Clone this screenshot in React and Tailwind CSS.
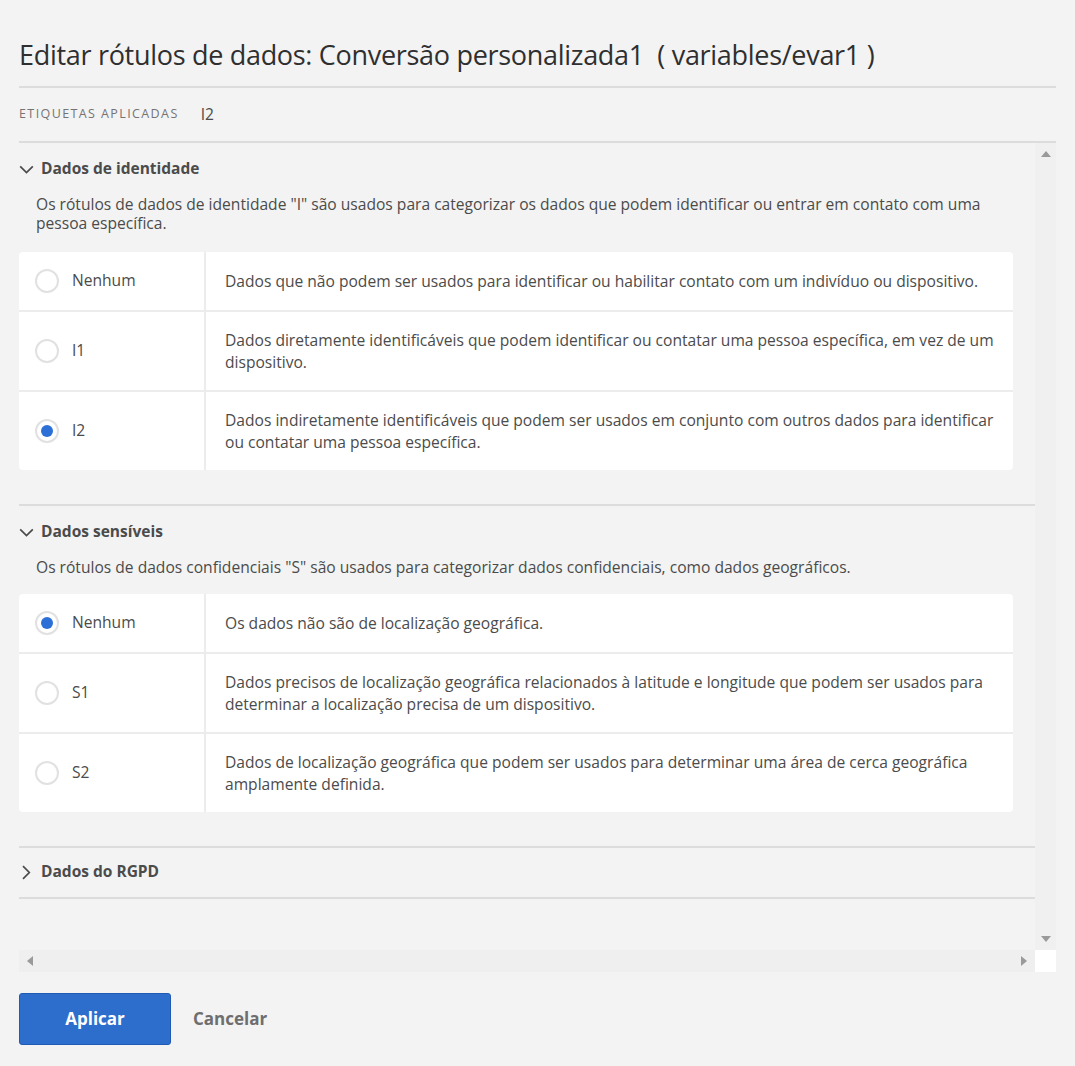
import React from 'react';

const identity = [
  { id: 'Nenhum', text: 'Dados que não podem ser usados para identificar ou habilitar contato com um indivíduo ou dispositivo.', h: 'h-[58px]' },
  { id: 'I1', text: 'Dados diretamente identificáveis que podem identificar ou contatar uma pessoa específica, em vez de um dispositivo.', h: 'h-[80px]' },
  { id: 'I2', text: 'Dados indiretamente identificáveis que podem ser usados em conjunto com outros dados para identificar ou contatar uma pessoa específica.', h: 'h-[80px]', checked: true },
];

const sensitive = [
  { id: 'Nenhum', text: 'Os dados não são de localização geográfica.', h: 'h-[58px]', checked: true },
  { id: 'S1', text: 'Dados precisos de localização geográfica relacionados à latitude e longitude que podem ser usados para determinar a localização precisa de um dispositivo.', h: 'h-[80px]' },
  { id: 'S2', text: 'Dados de localização geográfica que podem ser usados para determinar uma área de cerca geográfica amplamente definida.', h: 'h-[80px]' },
];

const Chevron = ({ open }) => (
  <svg width="15" height="15" viewBox="0 0 15 15" className="text-[#4b4b4b]">
    {open ? (
      <path d="M1.2 4.3 L7.5 10.6 L13.8 4.3" fill="none" stroke="currentColor" strokeWidth="1.7" />
    ) : (
      <path d="M4 1.2 L10.3 7.5 L4 13.8" fill="none" stroke="currentColor" strokeWidth="1.7" />
    )}
  </svg>
);

const Radio = ({ checked }) => (
  <span className="w-[24px] h-[24px] rounded-full border-2 border-[#e1e1e1] bg-white flex items-center justify-center">
    {checked && <span className="w-[12px] h-[12px] rounded-full bg-[#2c6fd6]" />}
  </span>
);

const Table = ({ rows }) => (
  <div className="bg-white rounded-[4px] w-[994px]">
    {rows.map((r, i) => (
      <div key={i} className={`flex ${r.h} ${i > 0 ? 'border-t-2 border-[#ececec]' : ''}`}>
        <div className="w-[187px] border-r-2 border-[#ececec] flex items-center gap-[13px] pl-[16px]">
          <Radio checked={r.checked} />
          <span className="text-[#4b4b4b]">{r.id}</span>
        </div>
        <div className="flex-1 flex items-center pl-[19px] pr-[12px] text-[#4b4b4b] leading-[22px]">{r.text}</div>
      </div>
    ))}
  </div>
);

const Section = ({ title, desc, rows, gap }) => (
  <div>
    <div className="flex items-center gap-[7px] h-[26px]">
      <Chevron open />
      <span className="font-bold text-[#4b4b4b] text-[15.5px]">{title}</span>
    </div>
    <p className="pl-[17px] pr-[30px] mt-[13px] leading-[18.5px] text-[#4b4b4b]">{desc}</p>
    <div className={gap}><Table rows={rows} /></div>
  </div>
);

export default function App() {
  return (
    <div className="w-[1075px] h-[1066px] bg-[#f3f3f3] px-[19px] pt-[36px] text-[15.6px] text-[#4b4b4b]" style={{ fontFamily: '"Open Sans", "Noto Sans", sans-serif' }}>
      <h1 className="text-[27px] leading-[38px] text-[#2f2f2f] tracking-[-0.3px]">Editar rótulos de dados: Conversão personalizada1 &nbsp;( variables/evar1 )</h1>
      <div className="mt-[12px] border-t-2 border-[#dcdcdc]" />
      <div className="flex items-center h-[53px] gap-[22px]">
        <span className="text-[12.5px] tracking-[1.4px] text-[#747474]">ETIQUETAS APLICADAS</span>
        <span className="text-[15.6px] text-[#4b4b4b]">I2</span>
      </div>
      <div className="border-t-2 border-[#dcdcdc]" />
      <div className="flex h-[829px]">
        <div className="flex-1 flex flex-col">
          <div className="flex-1 pt-[13px]">
            <Section
              title="Dados de identidade"
              desc={'Os rótulos de dados de identidade "I" são usados para categorizar os dados que podem identificar ou entrar em contato com uma pessoa específica.'}
              rows={identity}
              gap="mt-[20px]"
            />
            <div className="mt-[34px] border-t-2 border-[#dcdcdc]" />
            <div className="pt-[13px]">
              <Section
                title="Dados sensíveis"
                desc={'Os rótulos de dados confidenciais "S" são usados para categorizar dados confidenciais, como dados geográficos.'}
                rows={sensitive}
                gap="mt-[17px]"
              />
            </div>
            <div className="mt-[34px] border-t-2 border-[#dcdcdc]" />
            <div className="flex items-center gap-[7px] h-[49px]">
              <Chevron />
              <span className="font-bold text-[#4b4b4b] text-[15.5px]">Dados do RGPD</span>
            </div>
            <div className="border-t-2 border-[#dcdcdc]" />
          </div>
          <div className="h-[22px] bg-[#efefef] flex items-center justify-between px-[8px]">
            <svg width="6" height="10" viewBox="0 0 6 10"><path d="M6 0 L0 5 L6 10 Z" fill="#9a9a9a" /></svg>
            <svg width="6" height="10" viewBox="0 0 6 10"><path d="M0 0 L6 5 L0 10 Z" fill="#9a9a9a" /></svg>
          </div>
        </div>
        <div className="w-[21px] flex flex-col">
          <div className="flex-1 bg-[#f0f0f0] flex flex-col items-center justify-between py-[8px]">
            <svg width="10" height="6" viewBox="0 0 10 6"><path d="M0 6 L5 0 L10 6 Z" fill="#9a9a9a" /></svg>
            <svg width="10" height="6" viewBox="0 0 10 6"><path d="M0 0 L5 6 L10 0 Z" fill="#9a9a9a" /></svg>
          </div>
          <div className="h-[22px] bg-white" />
        </div>
      </div>
      <div className="flex items-center gap-[22px] mt-[21px]">
        <button className="w-[152px] h-[52px] rounded-[3px] bg-[#2d6dcc] border border-[#1f5bb5] text-white font-bold text-[17px]">Aplicar</button>
        <span className="text-[#6e6e6e] font-bold text-[17px]">Cancelar</span>
      </div>
    </div>
  );
}
